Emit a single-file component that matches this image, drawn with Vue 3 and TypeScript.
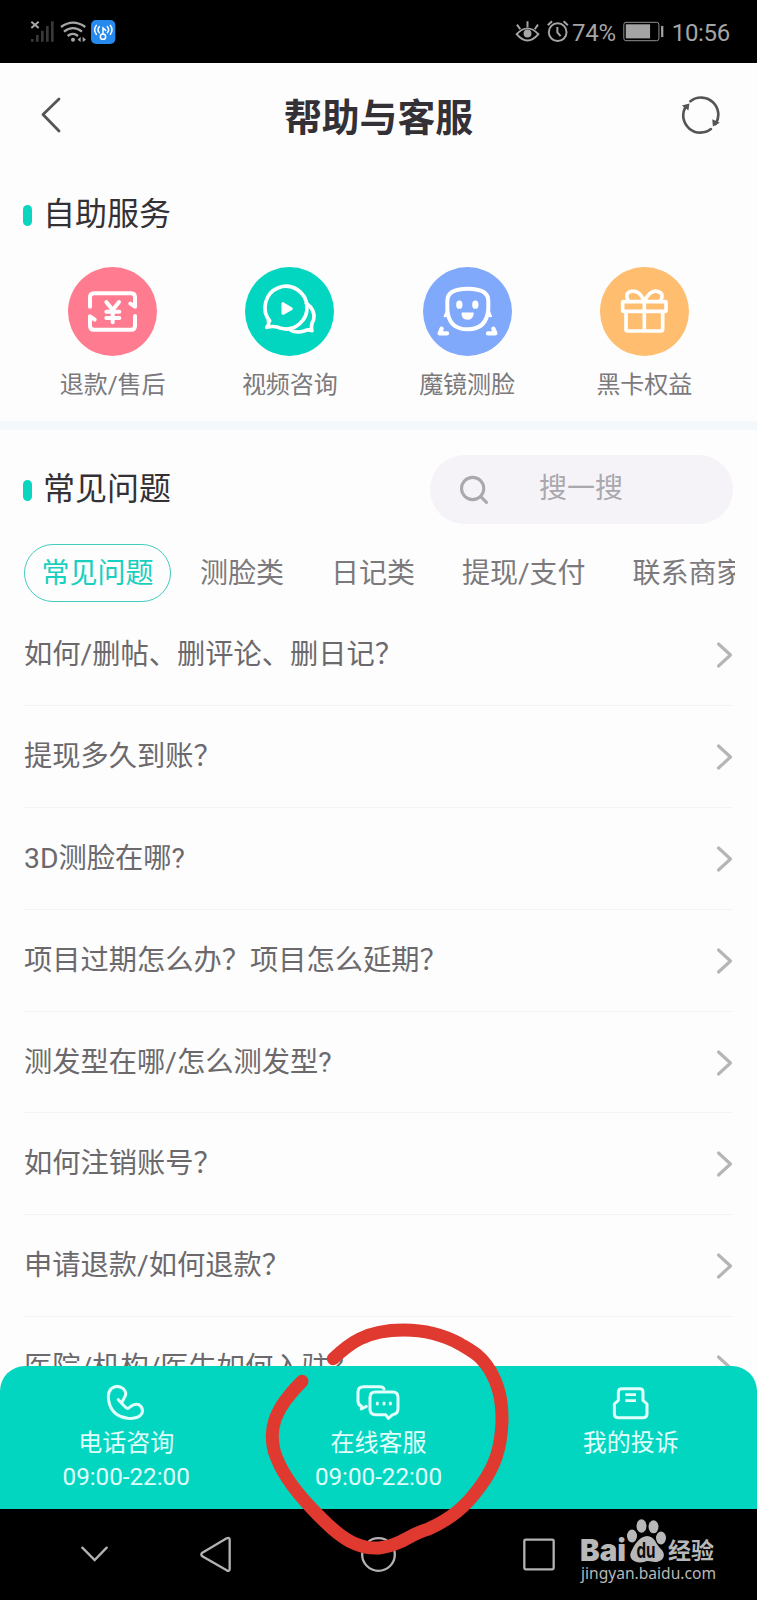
<script setup lang="ts">
import { ref } from 'vue'

interface Service { id: string; label: string; tone: string }
interface Contact { id: string; label: string; hours?: string }

const services: Service[] = [
  { id: 'refund', label: '退款/售后', tone: 'pink' },
  { id: 'video', label: '视频咨询', tone: 'teal' },
  { id: 'face', label: '魔镜测脸', tone: 'blue' },
  { id: 'gift', label: '黑卡权益', tone: 'orange' },
]
const tabs = ['常见问题', '测脸类', '日记类', '提现/支付', '联系商家']
const activeTab = ref(tabs[0])
const questions = [
  '如何/删帖、删评论、删日记？',
  '提现多久到账？',
  '3D测脸在哪?',
  '项目过期怎么办？项目怎么延期？',
  '测发型在哪/怎么测发型?',
  '如何注销账号？',
  '申请退款/如何退款？',
  '医院/机构/医生如何入驻？',
]
const contacts: Contact[] = [
  { id: 'phone', label: '电话咨询', hours: '09:00-22:00' },
  { id: 'chat', label: '在线客服', hours: '09:00-22:00' },
  { id: 'complaint', label: '我的投诉' },
]
</script>

<template>
  <div class="screen">
    <header class="status">
      <svg class="status-left" viewBox="84 54 270 84" fill="none">
        <path d="M94 65l22 19M116 65l-22 19" stroke="#a8a8a8" stroke-width="6" />
        <path d="M97 117v8M112 105v20M127 92v33M142 78v47M157 64v61" stroke="#393939" stroke-width="8" />
        <g stroke="#a6a6a6" stroke-width="7">
          <path d="M183 81Q219 55 256 81M192 95Q219 74 246 95M203 108Q219 95 234 108" />
          <circle cx="219" cy="119" r="4" fill="#a6a6a6" stroke-width="4" />
        </g>
        <path d="M233 119l9-9v16zM258 119l-10-9v16z" fill="#a6a6a6" />
        <rect x="273" y="60" width="73" height="72" rx="15" fill="#2589ee" />
        <g stroke="#fff" stroke-width="4.5" stroke-linecap="round">
          <circle cx="309" cy="110" r="8" />
          <path d="M309 101V84l8 7M298 80q-8 9 0 18M289 76q-10 14 0 27M322 80q8 9 0 18M331 76q10 14 0 27" />
        </g>
      </svg>
      <svg class="eye" viewBox="414 60 76 70" fill="none" stroke="#a5a5a5" stroke-width="6">
        <path d="M419 103q33-35 66 0q-33 39-66 0z" /><circle cx="452" cy="101" r="12" fill="#a5a5a5" stroke="none" />
        <path d="M452 82V64M430 88l-10-14M474 88l10-14" />
      </svg>
      <svg class="alarm" viewBox="508 60 72 70" fill="none" stroke="#a5a5a5" stroke-width="6">
        <circle cx="543" cy="97" r="27" /><path d="M542 81v17l10 11M513 76l13-12M574 76l-13-12" />
      </svg>
      <span class="percent">74%</span>
      <svg class="battery" viewBox="736 64 128 64" fill="none">
        <rect x="740" y="68" width="107" height="56" rx="7" stroke="#929292" stroke-width="3" />
        <path d="M746 74h74v43h-74z" fill="#a4a4a4" /><path d="M857 79v34" stroke="#a0a0a0" stroke-width="7" />
      </svg>
      <span class="clock">10:56</span>
    </header>

    <main class="page">
      <nav class="topbar">
        <svg class="back" viewBox="0 0 22 38" fill="none"><path d="M19 3L3 18.500L19 35" stroke="#555" stroke-width="2.800" stroke-linecap="round" stroke-linejoin="round" /></svg>
        <h1>帮助与客服</h1>
        <svg class="refresh" viewBox="912 286 120 118" fill="none">
          <path d="M940 302A52 52 0 0 1 1016 371M1002 386A52 52 0 0 1 924 321" stroke="#555" stroke-width="8" stroke-linecap="round" />
          <path d="M914 315L937 309L934 330ZM1029 367L1008 378L1006 356Z" fill="#555" />
        </svg>
      </nav>

      <section class="self">
        <h2>自助服务</h2>
        <div class="services">
          <div v-for="s in services" :key="s.id" class="service">
            <div class="disc" :class="s.tone">
              <svg v-if="s.id === 'refund'" viewBox="204 51 267 267" fill="none" stroke="#fff" stroke-width="12" stroke-linecap="round" stroke-linejoin="round">
                <path d="M270 170V142q0-12 12-12H393q12 0 12 12V170L391 161M405 198V227q0 12-12 12H282q-12 0-12-12V199L284 209" />
                <path d="M319 156L338 180L357 156M319 185H358M319 204H358M338 180V217" />
              </svg>
              <svg v-else-if="s.id === 'video'" viewBox="736 51 267 267" fill="none" stroke="#fff" stroke-width="11" stroke-linecap="round" stroke-linejoin="round">
                <path d="M810 213A63 64 0 1 1 844 235Q826 226 801 232Q810 223 806 210" />
                <path d="M920 160Q948 180 942 209Q932 225 937 242Q926 237 916 242Q890 251 872 240" />
                <path d="M850 161v29l25-14z" fill="#fff" stroke-width="9" />
              </svg>
              <svg v-else-if="s.id === 'face'" viewBox="137 51 267 267" fill="none" stroke="#fff" stroke-width="12" stroke-linecap="round" stroke-linejoin="round">
                <path d="M210 152Q210 116 271 116Q333 116 333 152V177Q328 238 271 238Q213 238 210 177Z" />
                <path d="M208 183l-6 16l10-2zM335 183l6 16l-10-2z" fill="#fff" stroke-width="6" />
                <ellipse cx="246" cy="164" rx="5" ry="8" fill="#fff" stroke-width="9" /><ellipse cx="294" cy="164" rx="5" ry="8" fill="#fff" stroke-width="9" />
                <path d="M255 190h32q-2 17-17 17t-15-17z" fill="#fff" stroke-width="5" />
                <path d="M193 236L187 250H209M348 236L354 250H332" stroke-width="13" />
              </svg>
              <svg v-else viewBox="669 51 267 267" fill="none" stroke="#fff" stroke-width="11" stroke-linecap="round" stroke-linejoin="round">
                <rect x="737" y="155" width="130" height="29" rx="3" /><path d="M747 186V238q0 5 5 5H852q5 0 5-5V186M802 156V242" />
                <path d="M802 155Q787 117 759 125Q742 132 755 154M802 155Q819 117 845 125Q863 132 850 154" />
              </svg>
            </div>
            <span>{{ s.label }}</span>
          </div>
        </div>
      </section>

      <section class="faq">
        <div class="faq-head">
          <h2>常见问题</h2>
          <div class="search">
            <svg viewBox="248 134 88 86" fill="none" stroke="#a9a8ad" stroke-width="9" stroke-linecap="round"><circle cx="288" cy="174" r="33" /><path d="M312 198l17 17" /></svg>
            <span>搜一搜</span>
          </div>
        </div>
        <div class="tabs">
          <button v-for="t in tabs" :key="t" type="button" :class="{ active: t === activeTab }" @click="activeTab = t">{{ t }}</button>
        </div>
        <ul>
          <li v-for="q in questions" :key="q">
            <span>{{ q }}</span>
            <svg viewBox="0 0 18 30" fill="none"><path d="M3.500 4L15.500 15L3.500 26" stroke="#b5b4b7" stroke-width="3.100" stroke-linecap="round" stroke-linejoin="round" /></svg>
          </li>
        </ul>
      </section>
    </main>

    <footer class="contacts">
      <div v-for="c in contacts" :key="c.id" class="contact">
        <svg v-if="c.id === 'phone'" viewBox="315 249 132 120" fill="none" stroke="#e1fffc" stroke-width="9" stroke-linecap="round" stroke-linejoin="round">
          <path d="M358 299L375 317Q386 331 393 321Q407 309 420 314Q434 323 429 340Q419 358 386 355Q344 349 332 314Q322 281 337 266Q354 252 373 266Q386 280 376 293L371 303" />
        </svg>
        <svg v-else-if="c.id === 'chat'" viewBox="348 249 132 120" fill="none" stroke="#e1fffc" stroke-width="9" stroke-linecap="round" stroke-linejoin="round">
          <path d="M432 267Q430 260 419 260H371Q354 260 354 276V304Q354 315 364 318V327L379 319" />
          <path d="M406 276H458Q474 276 474 292V326Q474 341 458 344L445 355L437 344H406Q390 344 390 328V292Q390 276 406 276Z" />
          <path d="M412 309v3M432 309v3M451 309v3" stroke-width="9" />
        </svg>
        <svg v-else viewBox="278 249 132 120" fill="none" stroke="#e1fffc" stroke-width="9" stroke-linejoin="round">
          <path d="M306 301V277Q306 266 317 266H371Q380 266 380 277V301L392 312V342Q392 353 381 353H305Q294 353 294 342V312Z" />
          <path d="M327 284H359M327 302H359" stroke-width="8" />
        </svg>
        <strong>{{ c.label }}</strong>
        <time v-if="c.hours">{{ c.hours }}</time>
      </div>
    </footer>

    <div class="sysnav">
      <svg class="nav-down" viewBox="242 738 81 48" fill="none"><path d="M246 743L283 780L319 743" stroke="#b3b1b3" stroke-width="7" stroke-linecap="round" /></svg>
      <svg class="nav-back" viewBox="601 708 93 111" fill="none"><path d="M608 758L681 715Q690 711 690 719V807Q690 815 681 811L608 769Q602 764 608 758Z" stroke="#b3b1b3" stroke-width="7" /></svg>
      <svg class="nav-home" viewBox="363 711 105 105" fill="none"><circle cx="415.500" cy="763.500" r="49" stroke="#b3b1b3" stroke-width="7" /></svg>
      <svg class="nav-recent" viewBox="18 714 97 98" fill="none"><rect x="22" y="718" width="89" height="90" rx="4" stroke="#b3b1b3" stroke-width="7" /></svg>
    </div>

    <svg class="watermark" viewBox="0 0 141 70" fill="#b8b8b8">
      <text class="wm-brand" x="2" y="45" textLength="46" lengthAdjust="spacingAndGlyphs">Bai</text>
      <ellipse cx="54" cy="20" rx="5" ry="6.500" /><ellipse cx="63.500" cy="10" rx="5" ry="6.800" /><ellipse cx="75.500" cy="10.800" rx="5" ry="6.500" /><ellipse cx="83" cy="22" rx="5" ry="6.500" />
      <path d="M69 20C77 20 78 29 83 33C89 39 85 46 77 46C73 46 71 44 66 46C56 48 50 42 53 36C56 30 60 21 69 20Z" />
      <text class="wm-du" x="58.500" y="42" textLength="19" lengthAdjust="spacingAndGlyphs">du</text>
      <text class="wm-cn" x="90" y="42.500">经验</text>
      <text class="wm-url" x="3" y="63" textLength="135" lengthAdjust="spacingAndGlyphs">jingyan.baidu.com</text>
    </svg>

    <svg class="marker" viewBox="0 0 870 900" fill="none">
      <path d="M280 176C325 133 375 90 490 90C560 90 615 107 660 132C700 156 722 166 750 211C778 260 787 305 786 365C783 445 765 500 721 559C678 620 632 657 565 687C530 697 502 715 482 725C438 745 398 753 347 732C300 713 253 665 214 624C172 580 125 525 103 455C86 390 99 330 186 244" stroke="#e03a30" stroke-width="39" stroke-linecap="round" stroke-linejoin="round" />
    </svg>
  </div>
</template>

<style>
body { margin: 0; }
</style>

<style scoped>
.screen { position: relative; width: 757px; height: 1600px; overflow: hidden; display: flex; flex-direction: column; background: #000; font-family: Roboto, "Noto Sans CJK SC", sans-serif; color: #666467; }
svg { display: block; flex: none; }
h1, h2, ul { margin: 0; padding: 0; }
.status { height: 63px; flex: none; display: flex; align-items: center; padding: 0 27px 0 28px; box-sizing: border-box; color: #a5a5a5; font-size: 24px; line-height: 28px; }
.status > span { padding-top: 2px; letter-spacing: -0.3px; }
.status-left { width: 90px; height: 28px; margin-top: 1px; }
.eye { width: 25px; height: 23px; margin-left: auto; }
.alarm { width: 24px; height: 23px; margin-left: 6px; }
.percent { margin-left: 2px; }
.battery { width: 43px; height: 21px; margin: 0 7px 0 6px; }
.page { flex: none; height: 1446px; margin-bottom: -143px; overflow: hidden; background: #fdfdfd; }
.topbar { height: 106px; display: flex; align-items: center; justify-content: space-between; padding: 0 36px 0 40px; }
.topbar h1 { font-size: 37.800px; line-height: 50px; font-weight: 700; color: #333135; padding: 3px 0 0 14px; }
.back { width: 22px; height: 38px; margin-top: -2px; }
.refresh { width: 40px; height: 39px; margin-top: -2px; }
h2 { display: flex; align-items: center; gap: 11px; margin-left: -1px; font-size: 32px; line-height: 44px; font-weight: 400; color: #333135; }
h2::before { content: ""; width: 9px; height: 21px; border-radius: 5px; background: #0bd5bf; margin-top: 3px; }
.self { height: 252px; padding: 23px 24px 0; box-sizing: border-box; }
.services { display: grid; grid-template-columns: repeat(4, 1fr); margin-top: 31px; }
.service { display: flex; flex-direction: column; align-items: center; gap: 12px; font-size: 24px; line-height: 34px; color: #7b797c; }
.disc { width: 89px; height: 89px; border-radius: 50%; }
.disc svg { width: 89px; height: 89px; }
.pink { background: #ff7c90; } .teal { background: #02d6c0; } .blue { background: #80a9fb; } .orange { background: #ffbd70; }
.faq { border-top: 9px solid #f5f8fb; padding: 25px 24px 0; }
.faq-head { display: flex; align-items: center; justify-content: space-between; height: 69px; }
.faq-head h2 { margin-top: -1px; }
.search { width: 303px; height: 69px; border-radius: 35px; background: #f5f3f7; display: flex; align-items: center; color: #aaa8ad; font-size: 28px; line-height: 40px; box-sizing: border-box; padding-left: 29px; gap: 50px; }
.search svg { width: 30px; height: 29px; margin-top: -1px; }
.search span { margin-top: -1px; }
.tabs { display: flex; overflow: hidden; margin-top: 20px; height: 58px; margin-right: -2px; }
.tabs button { flex: none; height: 58px; box-sizing: border-box; margin: 0 0 0 11px; padding: 0 17px; border: 1px solid transparent; border-radius: 29px; background: none; font: 28px/57px Roboto, "Noto Sans CJK SC", sans-serif; color: #7b797c; white-space: nowrap; }
.tabs button:first-child { margin-left: 0; padding: 0 16.500px; }
.tabs button.active { color: #19cfc0; border-color: #42cbbf; }
ul { list-style: none; padding-top: 2.500px; }
li { height: 101.800px; box-sizing: border-box; border-bottom: 1px solid #f3f3f4; display: flex; align-items: center; justify-content: space-between; font-size: 28.250px; line-height: 40px; color: #6b696c; }
li span { padding-top: 1px; }
li svg { width: 18px; height: 30px; margin-top: 1px; }
.contacts { position: relative; flex: none; height: 143px; box-sizing: border-box; display: grid; grid-template-columns: repeat(3, 1fr); padding-top: 17px; background: #02d6c0; border-radius: 25px 25px 0 0; color: #e1fffc; }
.contact { display: flex; flex-direction: column; align-items: center; }
.contact svg { width: 44px; height: 40px; }
.contact strong { font-size: 24px; line-height: 36px; font-weight: 400; margin-top: 2px; }
.contact time { font-size: 24.200px; line-height: 30px; margin-top: 1px; }
.sysnav { height: 91px; flex: none; display: flex; align-items: center; padding-left: 81px; box-sizing: border-box; }
.nav-down { width: 27px; height: 16px; margin-top: -1px; }
.nav-back { width: 31px; height: 37px; margin-left: 92px; }
.nav-home { width: 35px; height: 35px; margin-left: 130px; }
.nav-recent { width: 32px; height: 33px; margin-left: 127px; }
.watermark { position: absolute; left: 578px; top: 1516px; width: 141px; height: 70px; }
.wm-brand { font: 900 30px Inter, sans-serif; }
.wm-du { font: 700 21px Inter, sans-serif; fill: #0b0b0b; }
.wm-cn { font: 700 23px "Noto Sans CJK SC", sans-serif; }
.wm-url { font: 17px "Noto Sans", sans-serif; }
.marker { position: absolute; left: 240px; top: 1300px; width: 290px; height: 300px; pointer-events: none; }
</style>
